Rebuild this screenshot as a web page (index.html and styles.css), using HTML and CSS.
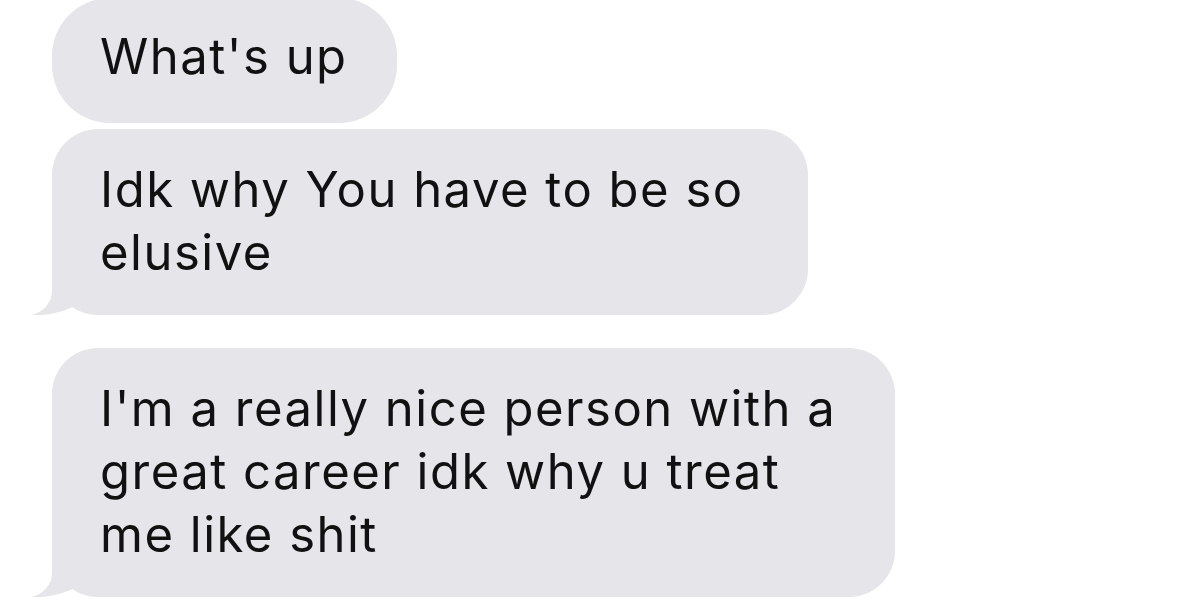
FILE: index.html
```html
<!DOCTYPE html>
<html lang="en">
<head>
<meta charset="utf-8">
<title>Messages</title>
<link rel="stylesheet" href="styles.css">
</head>
<body>
<main class="thread">
  <div class="bubble bubble-first"><span class="text">What's up</span></div>
  <div class="bubble bubble-mid">
    <svg class="tail" width="70" height="60" viewBox="0 0 70 60" aria-hidden="true"><path d="M21,0 L21,36 C21,48 12,57 1,60 C16,61 34,57 47,49 C54,56 60,60 70,60 L70,0 Z"/></svg>
    <span class="text">Idk why You have to be so<br>elusive</span>
  </div>
  <div class="bubble bubble-last">
    <svg class="tail" width="70" height="60" viewBox="0 0 70 60" aria-hidden="true"><path d="M21,0 L21,36 C21,48 12,57 1,60 C16,61 34,57 47,49 C54,56 60,60 70,60 L70,0 Z"/></svg>
    <span class="text">I'm a really nice person with a<br>great career idk why u treat<br>me like shit</span>
  </div>
</main>
</body>
</html>
```

FILE: styles.css
```css
html, body {
  margin: 0;
  padding: 0;
  background: #ffffff;
}

body {
  width: 1200px;
  height: 600px;
  overflow: hidden;
}

.thread {
  display: flex;
  flex-direction: column;
  align-items: flex-start;
  padding-left: 52px;
  margin-top: -2px;
}

.bubble {
  position: relative;
  box-sizing: border-box;
  background: #e5e5ea;
  color: #111111;
  font-family: Inter, "Liberation Sans", Arial, sans-serif;
  font-size: 49px;
  letter-spacing: 1.5px;
  line-height: 63px;
  padding: 29px 20px 31px 48px;
  border-radius: 46px;
  white-space: nowrap;
}

.text {
  position: relative;
  z-index: 1;
}

.bubble-first {
  width: 345px;
  padding-top: 27px;
  padding-bottom: 35px;
  border-radius: 58px;
}

.bubble-mid {
  width: 756px;
  margin-top: 6px;
}

.bubble-last {
  width: 843px;
  margin-top: 33px;
}

.tail {
  position: absolute;
  left: -21px;
  bottom: 0;
  display: block;
  z-index: 0;
}

.tail path {
  fill: #e5e5ea;
}
```
